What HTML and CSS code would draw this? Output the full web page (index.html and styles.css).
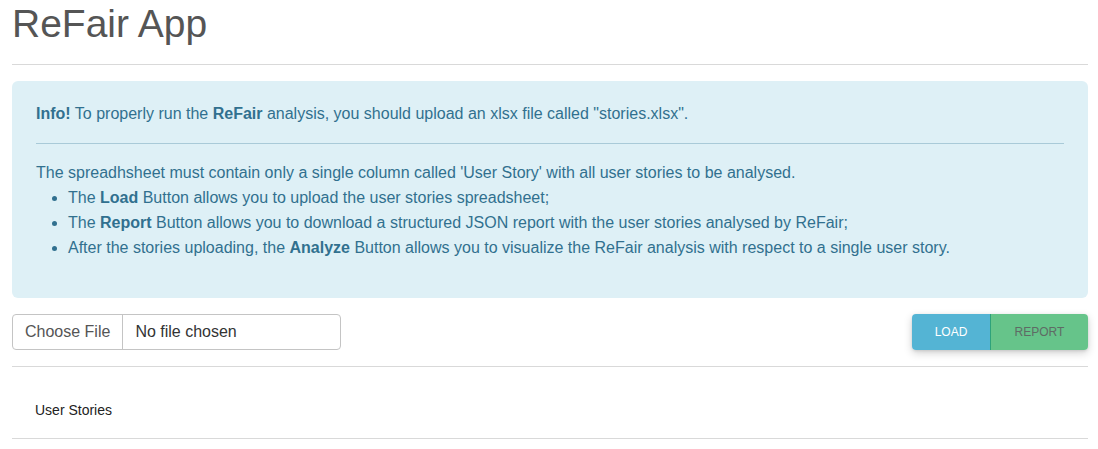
FILE: index.html
```html
<!DOCTYPE html>
<html>
<head>
<meta charset="utf-8">
<link rel="stylesheet" href="styles.css">
</head>
<body>
<div class="page">
  <h1 class="title">ReFair App</h1>
  <hr class="rule">
  <div class="alert">
    <p class="alert-lead"><b>Info!</b> To properly run the <b>ReFair</b> analysis, you should upload an xlsx file called "stories.xlsx".</p>
    <hr class="alert-rule">
    <p class="alert-text">The spreadhsheet must contain only a single column called 'User Story' with all user stories to be analysed.</p>
    <ul class="alert-list">
      <li>The <b>Load</b> Button allows you to upload the user stories spreadsheet;</li>
      <li>The <b>Report</b> Button allows you to download a structured JSON report with the user stories analysed by ReFair;</li>
      <li>After the stories uploading, the <b>Analyze</b> Button allows you to visualize the ReFair analysis with respect to a single user story.</li>
    </ul>
  </div>
  <div class="toolbar">
    <div class="file">
      <span class="file-btn">Choose File</span>
      <span class="file-name">No file chosen</span>
    </div>
    <div class="btn-group">
      <button class="btn btn-load">LOAD</button>
      <button class="btn btn-report">REPORT</button>
    </div>
  </div>
  <hr class="rule rule-mid">
  <div class="stories">User Stories</div>
  <hr class="rule">
</div>
</body>
</html>
```

FILE: styles.css
```css
* { box-sizing: border-box; }
html, body { margin: 0; padding: 0; background: #fff; }
body {
  font-family: "Liberation Sans", Arial, sans-serif;
  font-size: 16px;
  color: #333;
}
.page { padding: 0 10px 0 12px; }
.title {
  margin: 2px 0 0 0;
  font-size: 39px;
  font-weight: 400;
  line-height: 43px;
  color: #555;
}
.rule {
  border: 0;
  border-top: 1px solid #d9d9d9;
  margin: 0;
}
.title + .rule { margin-top: 19px; }
.alert {
  margin-top: 16px;
  background: #def0f6;
  color: #31708f;
  border-radius: 6px;
  padding: 20px 24px 38px 24px;
  font-size: 16px;
  line-height: 25px;
}
.alert b { font-weight: 700; }
.alert p { margin: 0; }
.alert-rule {
  border: 0;
  border-top: 1px solid #a9cad8;
  margin: 17px 0 16px 0;
}
.alert-list {
  margin: 0;
  padding-left: 32px;
}
.toolbar {
  margin-top: 16px;
  display: flex;
  justify-content: space-between;
  align-items: center;
}
.file {
  display: flex;
  width: 329px;
  height: 36px;
  border: 1px solid #c4c4c4;
  border-radius: 4px;
  font-size: 16px;
  color: #444;
  overflow: hidden;
}
.file-btn {
  display: flex;
  align-items: center;
  padding: 0 12px;
  border-right: 1px solid #c4c4c4;
  color: #555;
}
.file-name {
  display: flex;
  align-items: center;
  padding: 0 12px;
  color: #333;
}
.btn-group {
  display: flex;
  border-radius: 4px;
  box-shadow: 0 3px 8px rgba(0,0,0,0.18), 0 1px 3px rgba(0,0,0,0.1);
  overflow: hidden;
}
.btn {
  border: 0;
  height: 36px;
  font-family: "Liberation Sans", Arial, sans-serif;
  font-size: 12px;
  padding: 0;
  cursor: pointer;
}
.btn-load {
  width: 79px;
  background: #54b4d4;
  color: #fff;
  border-right: 1px solid #2ea27a;
}
.btn-report {
  width: 97px;
  background: #66c48a;
  color: #5f6b65;
}
.rule-mid { margin-top: 16px; }
.stories {
  padding: 35px 23px 20px 23px;
  font-size: 14px;
  line-height: 16px;
  color: #222;
}
```
